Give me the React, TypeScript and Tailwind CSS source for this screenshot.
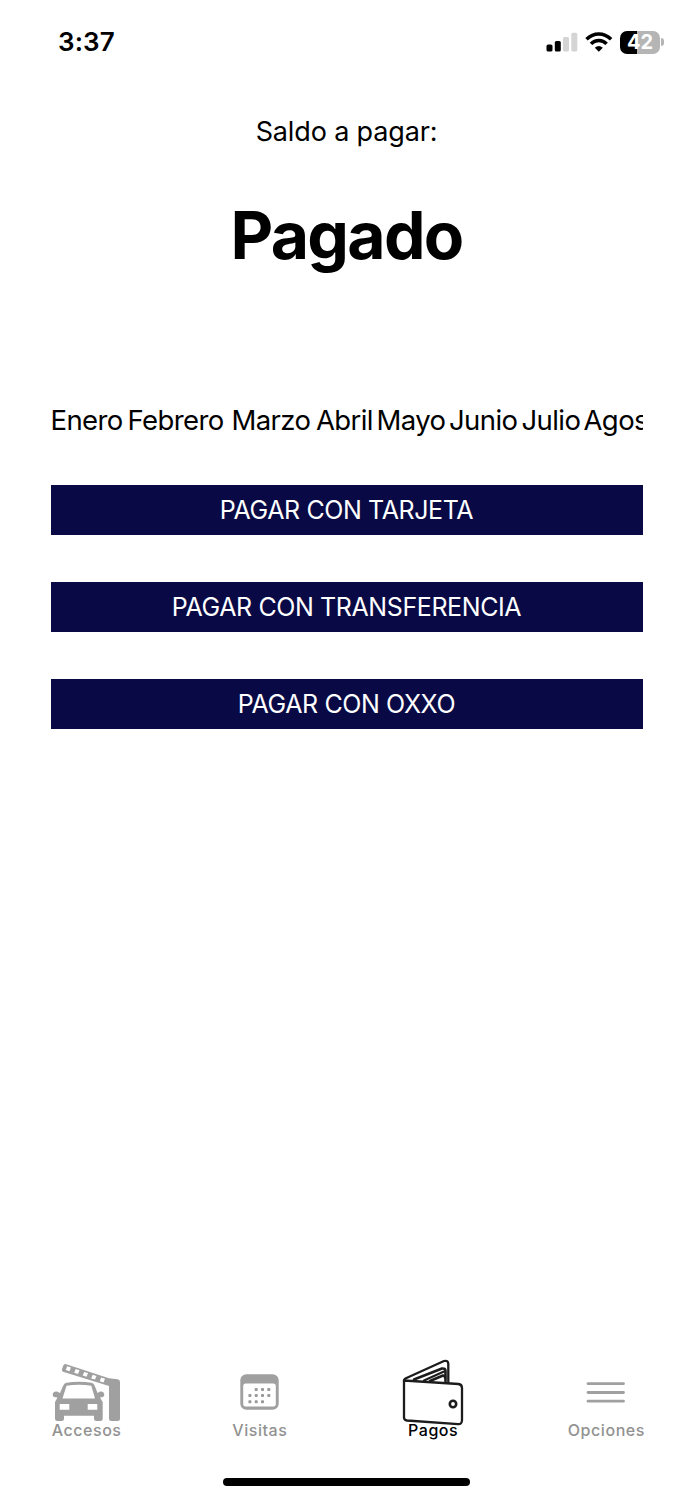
const MONTHS = [
  { name: "Enero", box: "w-[77px]" },
  { name: "Febrero", box: "w-[104px]" },
  { name: "Marzo", box: "w-[84.500px]" },
  { name: "Abril", box: "w-[60.500px]" },
  { name: "Mayo", box: "w-[72.500px]" },
  { name: "Junio", box: "w-[72.500px]" },
  { name: "Julio", box: "w-[62px]" },
  { name: "Agosto", box: "w-[92px]" },
];

const METHODS = ["PAGAR CON TARJETA", "PAGAR CON TRANSFERENCIA", "PAGAR CON OXXO"];

function StatusBar() {
  return (
    <header className="flex h-[84px] items-center justify-between pr-[29px] pl-[58px]">
      <time className="text-[26px] leading-8 font-semibold tracking-[0.1px]">3:37</time>
      <div className="flex items-center">
        <svg className="h-[20px] w-[32px]" viewBox="0 0 32 20">
          <rect x="0.5" y="12.5" width="6" height="7" rx="1.6" />
          <rect x="8.8" y="9" width="6" height="10.5" rx="1.6" />
          <rect x="17" y="5" width="6" height="14.5" rx="1.6" fill="#d4d4d4" />
          <rect x="25.3" y="0.7" width="6" height="18.8" rx="1.6" fill="#d4d4d4" />
        </svg>
        <svg className="ml-[7px] h-[20px] w-[28px]" viewBox="0 0 28 20" fill="none" stroke="#000" strokeWidth="3.5">
          <path d="M1.500 7.200Q7 1.900 13.800 1.900T26.100 7.200" />
          <path d="M6 11.900Q9.200 8.600 13.800 8.600T21.600 11.900" />
          <path d="M9.800 15.800Q13.800 12.300 17.800 15.800L13.800 19.800Z" fill="#000" stroke="none" />
        </svg>
        <div className="ml-[7px] flex h-[23px] w-[40px] items-center justify-center rounded-[7px] bg-linear-to-r from-black from-42% to-[#b5b5b5] to-42% text-[20px] leading-none font-bold text-white">
          42
        </div>
        <div className="ml-[1px] h-[8px] w-[3px] rounded-r-full bg-[#b5b5b5]" />
      </div>
    </header>
  );
}

function GateIcon() {
  return (
    <svg className="h-[60px] w-[70px]" viewBox="0 0 70 60">
      <path d="M13.500 2L57 16.300L65.500 17.300Q68 17.500 68 20V56.500Q68 59 65.500 59H59.500Q57 59 57 56.500V24L11 9.800Q9.500 9 10 7L11.300 3.500Q12 1.800 13.500 2Z" fill="#a0a0a0" />
      <g fill="#fff">
        <path d="M15.200 4.300L19 5.500L17.500 9.200L13.700 8Z" />
        <path d="M23.700 7.100L27.500 8.300L26 12L22.200 10.800Z" />
        <path d="M32.200 9.900L36 11.100L34.500 14.800L30.700 13.600Z" />
        <path d="M40.700 12.700L44.500 13.900L43 17.600L39.200 16.400Z" />
        <path d="M49.200 15.500L53 16.700L51.500 20.400L47.700 19.200Z" />
      </g>
      <path
        fill="#a0a0a0"
        fillRule="evenodd"
        d="M14.500 20.700Q27 19 39.500 20.700Q42 21 42.800 24L45.500 31L48 29.500Q52.300 29 52.300 33Q52 35.500 48 35.500L50.700 40V56.500Q50.700 59 48 59H44.500Q42 59 42 56.500V53.700H12V56.500Q12 59 9.500 59H5.500Q3 59 3 56.500V40L5.500 35.500Q0.700 35.500 0.700 33Q0.700 29 5 29.500L8 31L11 24Q12 21 14.500 20.700ZM14.500 23.700L10.500 36.500H43L39.300 23.700Q27 21.800 14.500 23.700ZM7.700 42V47.800H17.300V42ZM35.700 42V47.800H45.300V42Z"
      />
    </svg>
  );
}

function CalendarIcon() {
  const dots = [
    [16.2, 15.5], [22.5, 15.5], [28.8, 15.5],
    [9.9, 21.5], [16.2, 21.5], [22.5, 21.5], [28.8, 21.5],
    [9.9, 27.7], [16.2, 27.7], [22.5, 27.7],
  ];
  return (
    <svg className="h-[36px] w-[39px]" viewBox="0 0 39 36">
      <rect x="0.3" y="0.2" width="38.4" height="35.5" rx="6" fill="#a0a0a0" />
      <rect x="3.2" y="9.5" width="32.6" height="23" rx="2.5" fill="#fff" />
      {dots.map(([x, y]) => (
        <rect key={`${x}-${y}`} x={x - 1.5} y={y - 1.5} width="3" height="3" rx="0.8" fill="#999" />
      ))}
    </svg>
  );
}

function WalletIcon() {
  return (
    <svg className="h-[70px] w-[64px]" viewBox="0 0 64 70" fill="none" stroke="#1c1c1c" strokeWidth="2.3" strokeLinejoin="round" strokeLinecap="round">
      <path d="M3 21.500L57.500 25Q61 25.500 61 29V61Q61 65.500 57 65.200L6 61.500Q3 61 3 58.500Z" />
      <path d="M3 21.500Q3 20 6 18.700L43 2Q47.300 1 47.300 5V23.500" />
      <path d="M13 20.500L41 9.500Q44.500 9 44.500 12V22.500" strokeWidth="2.6" />
      <path d="M23 21.500L43 12.500" strokeWidth="2" />
      <path d="M29 22L42 16.500Q44 16.500 44 18.500" strokeWidth="2.6" />
      <circle cx="52" cy="45" r="3.2" strokeWidth="2.6" />
    </svg>
  );
}

function MenuIcon() {
  return (
    <svg className="h-[24px] w-[40px]" viewBox="0 0 40 24" stroke="#a0a0a0" strokeWidth="2.8" strokeLinecap="round">
      <path d="M2 3.700H37.500M2 12.500H37.500M2 21.200H37.500" />
    </svg>
  );
}

export default function App() {
  return (
    <div className="flex h-[1500px] w-[693px] flex-col overflow-hidden bg-white font-['Inter',sans-serif] text-black">
      <StatusBar />
      <main className="flex flex-1 flex-col px-[50.500px] pt-[30px]">
        <p className="text-center text-[27px] leading-9 tracking-[-0.150px]">Saldo a pagar:</p>
        <h1 className="mt-[45px] text-center text-[66px] leading-[80px] font-bold tracking-[-1.700px]">Pagado</h1>
        <div className="mt-[127px] flex h-[36px] overflow-hidden text-[27.500px] leading-9 tracking-[-0.600px]">
          {MONTHS.map((m) => (
            <span key={m.name} className={`shrink-0 whitespace-nowrap ${m.box}`}>{m.name}</span>
          ))}
        </div>
        <div className="mt-[47px] flex flex-col gap-[47px]">
          {METHODS.map((label) => (
            <button key={label} className="h-[50px] w-[592px] bg-[#090a45] pt-px text-[25px] leading-[49px] tracking-[-0.400px] text-white">
              {label}
            </button>
          ))}
        </div>
      </main>
      <nav className="grid h-[92px] grid-cols-4 text-[16px] leading-5 font-medium tracking-[0.550px] text-[#929292]">
        <a className="flex flex-col items-center justify-end"><GateIcon /><span className="-mt-[2px]">Accesos</span></a>
        <a className="flex flex-col items-center justify-end"><CalendarIcon /><span className="mt-[10px]">Visitas</span></a>
        <a className="flex flex-col items-center justify-end text-black"><WalletIcon /><span className="-mt-[9px]">Pagos</span></a>
        <a className="flex flex-col items-center justify-end"><MenuIcon /><span className="mt-[16px]">Opciones</span></a>
      </nav>
      <div className="flex h-[60px] items-end justify-center pb-[14px]">
        <div className="h-[8px] w-[247px] rounded-full bg-black" />
      </div>
    </div>
  );
}
